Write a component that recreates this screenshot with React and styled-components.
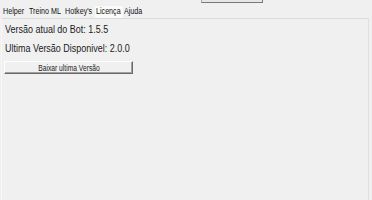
import styled, { createGlobalStyle } from "styled-components";

const Global = createGlobalStyle`
  html, body { margin: 0; padding: 0; background: #f0f0f0; }
  body { font-family: "Liberation Sans", Arial, sans-serif; }
`;

const Page = styled.div`
  width: 372px;
  height: 200px;
  background: #f0f0f0;
  position: relative;
  overflow: hidden;
`;

// resto do botão de cima, cortado
const TopButton = styled.div`
  position: absolute;
  left: 201px;
  top: -12px;
  width: 60px;
  height: 13px;
  border: 1px solid #adadad;
  border-bottom-color: #7a7a7a;
  border-right-color: #7a7a7a;
  background: #e6e6e6;
`;

const Tabs = styled.div`
  display: flex;
  align-items: flex-end;
  height: 18px;
  padding-left: 2px;
`;

const Tab = styled.div`
  width: ${(p) => p.w}px;
  font-size: 8.5px;
  color: #111;
  padding: 0 0 2px 1px;
  white-space: nowrap;
  background: ${(p) => (p.active ? "#fafafa" : "transparent")};
`;

// fonte do print é mais estreita
const Narrow = styled.span`
  display: inline-block;
  transform: scaleX(${(p) => p.k || 0.8});
  transform-origin: left center;
  white-space: nowrap;
`;

const Panel = styled.div`
  margin: 0 3px 0 1px;
  height: 182px;
  border-top: 1px solid #dadada;
  border-right: 1px solid #e0e0e0;
  border-left: 1px solid #f8f8f8;
  padding: 3px 0 0 3px;
  box-sizing: border-box;
`;

const Line = styled.div`
  font-size: 11.5px;
  color: #1a1a1a;
  height: 19px;
  line-height: 14px;
`;

const Button = styled.button`
  display: block;
  margin: 1px 0 0 -1px;
  width: 129px;
  height: 13px;
  padding: 0;
  font-family: "Liberation Sans", Arial, sans-serif;
  font-size: 8.5px;
  line-height: 10px;
  color: #1a1a1a;
  background: #f0f0f0;
  border: 1px solid;
  border-color: #fff #696969 #696969 #fff;
  box-shadow: inset -1px -1px 0 #a0a0a0;
  text-align: center;
`;

const BtnLabel = styled(Narrow)`
  transform-origin: center center;
`;

function App() {
  return (
    <Page>
      <Global />
      <TopButton />
      <Tabs>
        <Tab w={25}><Narrow k={0.84}>Helper</Narrow></Tab>
        <Tab w={35}><Narrow k={0.84}>Treino ML</Narrow></Tab>
        <Tab w={30}><Narrow k={0.84}>Hotkey's</Narrow></Tab>
        <Tab active w={27}><Narrow k={0.84}>Licença</Narrow></Tab>
        <Tab w={24}><Narrow k={0.84}>Ajuda</Narrow></Tab>
      </Tabs>
      <Panel>
        <Line><Narrow k={0.78}>Versão atual do Bot: 1.5.5</Narrow></Line>
        <Line><Narrow k={0.78}>Ultima Versão Disponivel: 2.0.0</Narrow></Line>
        <Button><BtnLabel k={0.79}>Baixar ultima Versão</BtnLabel></Button>
      </Panel>
    </Page>
  );
}

export default App;
